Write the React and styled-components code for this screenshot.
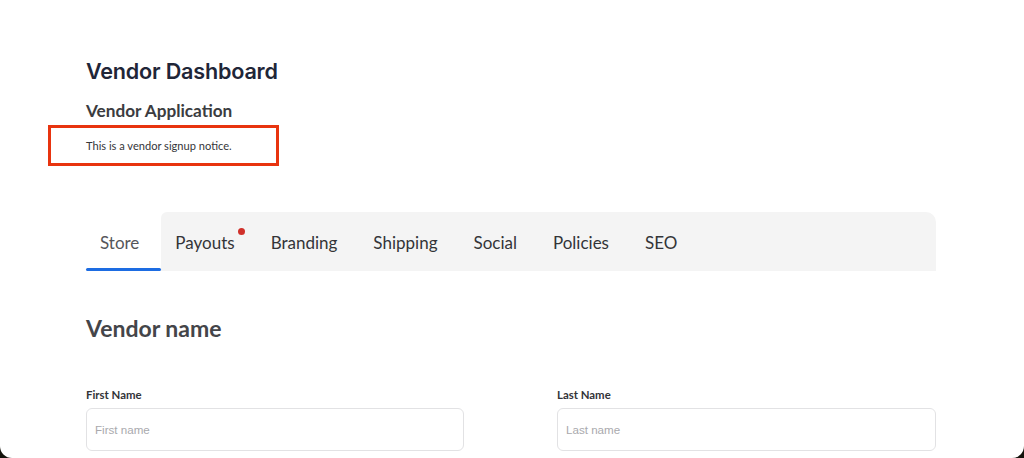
import React from "react";
import styled, { createGlobalStyle } from "styled-components";

const Global = createGlobalStyle`
  html, body { margin: 0; padding: 0; background: #14130c; }
  * { box-sizing: border-box; }
`;

const Window = styled.div`
  height: 458px;
  background: #ffffff;
  border-radius: 0 0 12px 12px;
  overflow: hidden;
  font-family: Lato, "Open Sans", sans-serif;
`;

const Container = styled.main`
  width: 850px;
  margin: 0 auto 0 86px;
  padding-top: 57px;
`;

const Title = styled.h1`
  margin: 0;
  font-family: Inter, "Noto Sans", sans-serif;
  font-size: 21.6px;
  line-height: 28px;
  font-weight: 600;
  color: #1f2638;
  letter-spacing: -0.2px;
`;

const Subtitle = styled.h2`
  margin: 15px 0 0;
  font-size: 17.2px;
  line-height: 22px;
  font-weight: 700;
  color: #3b3c40;
`;

const Notice = styled.p`
  margin: 3px 0 0 -38px;
  width: 231px;
  height: 41px;
  padding: 0 0 0 35px;
  border: 3px solid #e8340f;
  display: flex;
  align-items: center;
  font-size: 11.1px;
  color: #35363a;
`;

const TabList = styled.nav`
  margin-top: 46px;
  display: flex;
  height: 59px;
`;

const Tab = styled.div`
  position: relative;
  display: flex;
  align-items: center;
  padding: 2px ${(p) => p.$padRight || 18}px 0 ${(p) => p.$padLeft || 18}px;
  font-size: 17px;
  color: ${(p) => (p.$active ? "#55565a" : "#333438")};
  background: ${(p) => (p.$active ? "#ffffff" : "transparent")};
`;

const Underline = styled.span`
  position: absolute;
  left: 0;
  right: 0;
  bottom: 0;
  height: 3px;
  border-radius: 2px;
  background: #1d6ce2;
`;

const TabRest = styled.div`
  flex: 1;
  display: flex;
  background: #f4f4f4;
  border-radius: 6px 10px 0 0;
`;

const TabLabel = styled.span`
  position: relative;
`;

const Dot = styled.span`
  position: absolute;
  top: -4px;
  right: -10px;
  width: 7px;
  height: 7px;
  border-radius: 50%;
  background: #d0302a;
`;

const Section = styled.h3`
  margin: 43px 0 0;
  font-size: 23px;
  line-height: 28px;
  font-weight: 700;
  color: #444549;
`;

const Grid = styled.div`
  margin-top: 46px;
  display: grid;
  grid-template-columns: 378px 379px;
  column-gap: 93px;
`;

const Field = styled.label`
  display: flex;
  flex-direction: column;
  gap: 6px;
`;

const Label = styled.span`
  font-size: 11.4px;
  line-height: 14px;
  font-weight: 700;
  color: #333438;
`;

const Input = styled.input`
  height: 43px;
  border: 1px solid #e2e2e4;
  border-radius: 6px;
  padding: 0 8px;
  font-family: "Liberation Sans", Arial, sans-serif;
  font-size: 11.6px;
  color: #333;
  outline: none;
  &::placeholder { color: #a9a9ad; }
`;

export default function App() {
  const rest = ["Branding", "Shipping", "Social", "Policies", "SEO"];
  return (
    <>
      <Global />
      <Window>
        <Container>
          <Title>Vendor Dashboard</Title>
          <Subtitle>Vendor Application</Subtitle>
          <Notice>This is a vendor signup notice.</Notice>
          <TabList>
            <Tab $active $padLeft={14} $padRight={22}>
              Store
              <Underline />
            </Tab>
            <TabRest>
              <Tab $padLeft={14}>
                <TabLabel>
                  Payouts
                  <Dot />
                </TabLabel>
              </Tab>
              {rest.map((t) => (
                <Tab key={t}>{t}</Tab>
              ))}
            </TabRest>
          </TabList>
          <Section>Vendor name</Section>
          <Grid>
            <Field>
              <Label>First Name</Label>
              <Input placeholder="First name" />
            </Field>
            <Field>
              <Label>Last Name</Label>
              <Input placeholder="Last name" />
            </Field>
          </Grid>
        </Container>
      </Window>
    </>
  );
}
